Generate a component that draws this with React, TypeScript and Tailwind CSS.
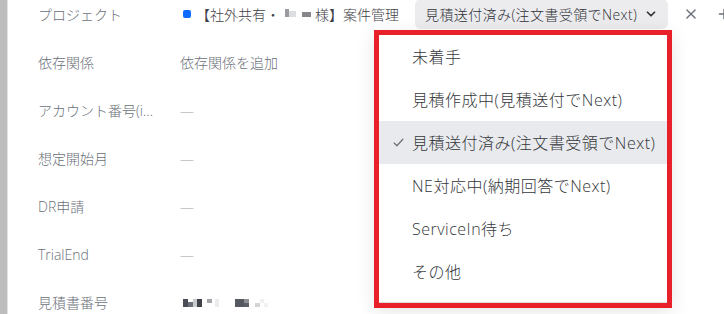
import React from "react";

const font = { fontFamily: '"Open Sans", "Noto Sans CJK JP", "Noto Sans", sans-serif' };

function Row({ label, children }: { label: string; children: React.ReactNode }) {
  return (
    <div className="flex h-12 shrink-0 items-center">
      <div className="w-[142px] shrink-0 text-[14px] text-[#6b7078] whitespace-nowrap">{label}</div>
      <div className="flex items-center text-[14px]">{children}</div>
    </div>
  );
}

const Dash = () => <span className="text-[#9ca0a8] text-[14px]">—</span>;

export default function App() {
  const items = [
    "未着手",
    "見積作成中(見積送付でNext)",
    "見積送付済み(注文書受領でNext)",
    "NE対応中(納期回答でNext)",
    "ServiceIn待ち",
    "その他",
  ];
  return (
    <div className="relative flex h-[314px] w-[724px] overflow-hidden bg-white font-light" style={font}>
      <div className="w-[7px] shrink-0 bg-[#bdbdbd]" />
      <div className="w-[1px] shrink-0 bg-[#e2e2e2]" />
      <div className="flex flex-1 flex-col pl-[30px] -mt-[10px]">
        <Row label="プロジェクト">
          <span className="ml-[3px] mr-[5px] h-[8px] w-[8px] rounded-[2px] bg-[#0b6bff]" />
          <span className="text-[#3f4248] whitespace-nowrap">【社外共有・</span>
          <span className="relative h-[14px] w-[35px]">
            <span className="absolute left-[5px] top-[2px] h-[8px] w-[4px] bg-[#9a9ca2]" />
            <span className="absolute left-[9px] top-[4px] h-[6px] w-[7px] bg-[#dcdde0]" />
            <span className="absolute left-[22px] top-[5px] h-[5px] w-[9px] bg-[#85878d]" />
          </span>
          <span className="text-[#3f4248] whitespace-nowrap">様】案件管理</span>
          <button className="ml-[16px] flex h-[30px] items-center gap-[7px] rounded-[6px] bg-[#ececef] pl-[10px] pr-[10px] text-[14px] tracking-[0.4px] text-[#2f3237] whitespace-nowrap">
            見積送付済み(注文書受領でNext)
            <svg width="14" height="14" viewBox="0 0 24 24" fill="none" stroke="#2f3237" strokeWidth="3" strokeLinecap="round" strokeLinejoin="round">
              <path d="M6 9l6 6 6-6" />
            </svg>
          </button>
          <svg className="ml-[16px] shrink-0" width="14" height="14" viewBox="0 0 24 24" fill="none" stroke="#6b7078" strokeWidth="2.4" strokeLinecap="round">
            <path d="M5 5l14 14M19 5L5 19" />
          </svg>
          <svg className="ml-[19px] shrink-0" width="14" height="14" viewBox="0 0 24 24" fill="none" stroke="#6b7078" strokeWidth="2.4" strokeLinecap="round">
            <path d="M12 4v16M4 12h16" />
          </svg>
        </Row>
        <Row label="依存関係">
          <span className="text-[#6b7078]">依存関係を追加</span>
        </Row>
        <Row label="アカウント番号(i...">
          <Dash />
        </Row>
        <Row label="想定開始月">
          <Dash />
        </Row>
        <Row label="DR申請">
          <Dash />
        </Row>
        <Row label="TrialEnd">
          <Dash />
        </Row>
        <Row label="見積書番号">
          <span className="relative h-[14px] w-[100px]">
            <span className="absolute left-[3px] top-[4px] h-[8px] w-[5px] bg-[#4a4d55]" />
            <span className="absolute left-[8px] top-[7px] h-[5px] w-[5px] bg-[#6c6f76]" />
            <span className="absolute left-[13px] top-[4px] h-[8px] w-[4px] bg-[#c9cacd]" />
            <span className="absolute left-[17px] top-[4px] h-[8px] w-[5px] bg-[#3f4249]" />
            <span className="absolute left-[27px] top-[4px] h-[4px] w-[5px] bg-[#a5a7ab]" />
            <span className="absolute left-[35px] top-[4px] h-[8px] w-[4px] bg-[#ececee]" />
            <span className="absolute left-[55px] top-[4px] h-[8px] w-[9px] bg-[#55585f]" />
            <span className="absolute left-[64px] top-[4px] h-[4px] w-[5px] bg-[#8e9096]" />
            <span className="absolute left-[64px] top-[8px] h-[4px] w-[5px] bg-[#5d6067]" />
            <span className="absolute left-[75px] top-[8px] h-[4px] w-[5px] bg-[#d4d5d8]" />
            <span className="absolute left-[80px] top-[4px] h-[4px] w-[4px] bg-[#f0f0f2]" />
            <span className="absolute left-[84px] top-[8px] h-[4px] w-[4px] bg-[#f2f2f4]" />
          </span>
        </Row>
      </div>

      <div className="absolute left-[374px] top-[30px] h-[278px] w-[298px] border-[5px] border-[#e8202a] bg-white shadow-[0_4px_18px_rgba(0,0,0,0.10)]">
        <div className="flex h-full flex-col border-b border-[#dcdcdc]">
          {items.map((t, i) => (
            <div
              key={t}
              className={
                i === 2
                  ? "flex h-[43px] shrink-0 items-center bg-[#e8eaed] text-[16px] tracking-[0.5px] text-[#35373b] whitespace-nowrap"
                  : "flex h-[43px] shrink-0 items-center text-[16px] tracking-[0.5px] text-[#35373b] whitespace-nowrap"
              }
            >
              <span className="flex w-[33px] items-center justify-end pr-[7px]">
                {i === 2 && (
                  <svg width="13" height="13" viewBox="0 0 24 24" fill="none" stroke="#6b6e74" strokeWidth="2.2" strokeLinecap="round" strokeLinejoin="round">
                    <path d="M4 13l5 5L20 6" />
                  </svg>
                )}
              </span>
              {t}
            </div>
          ))}
        </div>
      </div>
    </div>
  );
}
